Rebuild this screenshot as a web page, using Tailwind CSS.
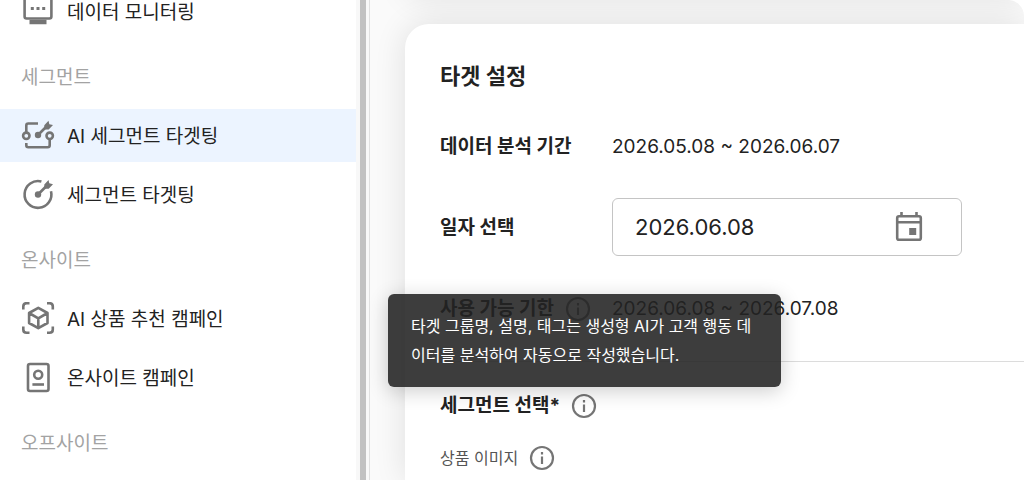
<!DOCTYPE html>
<html lang="ko">
<head>
    <meta charset="UTF-8">
    <meta name="viewport" content="width=device-width, initial-scale=1.0">
    <title>타겟 설정</title>
    <script src="https://cdn.jsdelivr.net/npm/@tailwindcss/browser@4"></script>
</head>
<body class="h-screen overflow-hidden bg-white text-[#222] font-[Inter,'Noto_Sans_CJK_KR',sans-serif]">
    <div class="flex h-full">
        <!-- Sidebar -->
        <aside class="w-[370px] shrink-0 flex overflow-hidden">
            <nav class="flex-1 -mt-[15px] text-[19px] leading-7">
                <a href="#" class="flex items-center h-[53px] pt-0.5 pl-5 gap-[11px]">
                    <svg class="size-9" viewBox="0 2 36 36" fill="none" stroke="#757575" stroke-width="2.6">
                        <rect x="4.600" y="5" width="26.800" height="20.500" rx="2"/>
                        <path d="M9.500 29H26.500" stroke-width="4.500"/>
                        <path d="M10.800 15.500h3M16.500 15.500h3M22.200 15.500h3" stroke-width="3"/>
                    </svg>
                    데이터 모니터링
                </a>
                <h2 class="flex items-center h-[71px] pt-2 pl-[21px] text-[#a3a3a3]">세그먼트</h2>
                <a href="#" class="flex items-center h-[53px] pt-0.5 pl-5 gap-[11px] bg-[#ecf4ff]">
                    <svg class="size-9" viewBox="0 2 36 36" fill="none" stroke="#757575" stroke-width="2.6">
                        <circle cx="6.300" cy="18.800" r="3.200"/>
                        <circle cx="29.700" cy="18.800" r="3.200"/>
                        <path d="M6.300 15.600V8.500q0-2 2-2H18M6.300 26v2.200q0 2 2 2H27.700q2 0 2-2V22"/>
                        <path d="M18 18L27 9"/>
                        <circle cx="18" cy="18" r="3.200" fill="#757575" stroke="none"/>
                        <path d="M24.300 8.200L28.500 3.800 29.300 7.200 33 8 28.700 12.500H24.300z" fill="#757575" stroke="none"/>
                    </svg>
                    AI 세그먼트 타겟팅
                </a>
                <a href="#" class="flex items-center h-[53px] mt-[6px] pt-0.5 pl-5 gap-[11px]">
                    <svg class="size-9" viewBox="0 2 36 36" fill="none" stroke="#757575" stroke-width="2.600">
                        <path d="M21.400 5.500A13.400 13.400 0 1 0 31 15.200"/>
                        <path d="M18 18.500L27 9.500"/>
                        <circle cx="18" cy="18.500" r="3.200" fill="#757575" stroke="none"/>
                        <path d="M24.300 8.400L28.500 3.900 29.300 7.300 33 8.200 28.700 12.700H24.300z" fill="#757575" stroke="none"/>
                    </svg>
                    세그먼트 타겟팅
                </a>
                <h2 class="flex items-center h-[71px] pt-2 pl-[21px] text-[#a3a3a3]">온사이트</h2>
                <a href="#" class="flex items-center h-[53px] pt-0.5 pl-5 gap-[11px]">
                    <svg class="size-9" viewBox="0 2 36 36" fill="none" stroke="#757575" stroke-width="2.600" stroke-linejoin="round">
                        <path d="M3.300 9.500V6.500q0-3.300 3.300-3.300H9.500M27 3.200h2.500q3.300 0 3.300 3.300V9.500M32.800 26.500v3q0 3.300-3.300 3.300H27M9.500 32.800H6.600q-3.300 0-3.300-3.300V26.500"/>
                        <path d="M18.300 7.800l9.200 5.200v10l-9.200 5.200-9.200-5.200v-10zM9.100 13l9.200 5.300 9.200-5.300M18.300 18.300V28"/>
                    </svg>
                    AI 상품 추천 캠페인
                </a>
                <a href="#" class="flex items-center h-[53px] mt-[6px] pt-0.5 pl-5 gap-[11px]">
                    <svg class="size-9" viewBox="0 2 36 36" fill="none" stroke="#757575" stroke-width="2.600">
                        <rect x="8" y="5" width="20.500" height="27" rx="2"/>
                        <circle cx="18.200" cy="15.800" r="4"/>
                        <path d="M12.400 25.500H24"/>
                    </svg>
                    온사이트 캠페인
                </a>
                <h2 class="flex items-center h-[71px] pt-2 pl-[21px] text-[#a3a3a3]">오프사이트</h2>
            </nav>
            <!-- Scrollbar -->
            <div class="w-[14px] h-full pl-1 bg-[#f8f8f8] border-r border-[#e0e0e0]">
                <div class="w-[6px] h-full bg-[#c1c1c1]"></div>
            </div>
        </aside>

        <!-- Content -->
        <main class="flex-1 flex flex-col pl-[35px] rounded-tr-2xl bg-[#fafafa] overflow-hidden">
            <section class="h-10 -mt-10 shrink-0 rounded-l-[24px] bg-white shadow-[0_0_32px_rgba(0,0,0,0.09)]"></section>
            <section class="relative flex-1 mt-6 pl-[35px] pt-9 rounded-tl-[24px] bg-white shadow-[0_0_32px_rgba(0,0,0,0.11)]">
                <h1 class="text-[22px] leading-8 font-bold">타겟 설정</h1>

                <dl class="flex items-center h-10 mt-[35px] text-[19px]">
                    <dt class="w-[172px] font-bold">데이터 분석 기간</dt>
                    <dd>2026.05.08 ~ 2026.06.07</dd>
                </dl>

                <div class="flex items-center mt-[31px] text-[19px]">
                    <label for="date" class="w-[172px] pt-0.5 font-bold">일자 선택</label>
                    <div class="flex items-center justify-between w-[350px] h-[58px] pl-[22px] pr-[34px] border border-[#c4c4c4] rounded-md">
                        <input id="date" type="text" value="2026.06.08" class="w-48 text-[22px] outline-none">
                        <button type="button" aria-label="달력 열기">
                            <svg class="size-9" viewBox="0 0 36 36" fill="none" stroke="#757575" stroke-width="2.600">
                                <rect x="6.200" y="7.200" width="23.600" height="23.600" rx="1.800"/>
                                <path d="M10.500 3V7M25.500 3V7M6 13.300H30"/>
                                <path d="M18.200 19h7v7h-7z" fill="#757575" stroke="none"/>
                            </svg>
                        </button>
                    </div>
                </div>

                <dl class="flex items-center h-10 mt-[33px] text-[19px]">
                    <dt class="flex items-center gap-3 w-[172px] font-bold">
                        사용 가능 기한
                        <svg class="size-6 overflow-visible" viewBox="0 0 24 24" fill="none" stroke="#757575" stroke-width="2.200">
                            <circle cx="12" cy="12" r="11"/>
                            <path d="M12 10.500V18M12 6V8.500"/>
                        </svg>
                    </dt>
                    <dd>2026.06.08 ~ 2026.07.08</dd>
                </dl>

                <hr class="mt-8 border-[#dcdcdc]">

                <h2 class="flex items-center gap-3 mt-7 text-[19px] leading-8 font-bold">
                    세그먼트 선택*
                    <svg class="size-6 overflow-visible" viewBox="0 0 24 24" fill="none" stroke="#757575" stroke-width="2.200">
                        <circle cx="12" cy="12" r="11"/>
                        <path d="M12 10.500V18M12 6V8.500"/>
                    </svg>
                </h2>
                <p class="flex items-center gap-3 mt-5 text-base leading-8 text-[#555]">
                    상품 이미지
                    <svg class="size-6 overflow-visible" viewBox="0 0 24 24" fill="none" stroke="#757575" stroke-width="2.200">
                        <circle cx="12" cy="12" r="11"/>
                        <path d="M12 10.500V18M12 6V8.500"/>
                    </svg>
                </p>

                <!-- Tooltip -->
                <div role="tooltip" class="absolute -left-[17px] top-[270px] w-[393px] px-[23px] pt-[18px] pb-[17px] rounded-md bg-[#222]/88 text-base leading-[29px] text-white shadow-[0_4px_20px_rgba(0,0,0,0.2)]">
                    타겟 그룹명, 설명, 태그는 생성형 AI가 고객 행동 데<br>이터를 분석하여 자동으로 작성했습니다.
                </div>
            </section>
        </main>
    </div>
</body>
</html>
